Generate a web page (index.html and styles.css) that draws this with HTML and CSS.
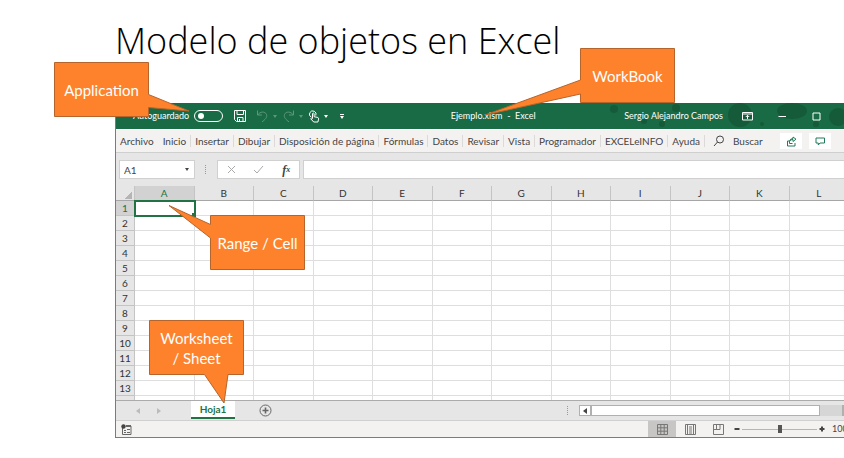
FILE: index.html
```html
<!DOCTYPE html>
<html lang="es">
<head>
<meta charset="utf-8">
<title>Modelo de objetos en Excel</title>
<link rel="stylesheet" href="styles.css">
</head>
<body>
<main class="slide">
  <h1 class="slide-title">Modelo de objetos en Excel</h1>

  <section class="app" aria-label="Excel">
    <header class="titlebar">
      <svg class="pattern" width="240" height="26" viewBox="0 0 240 26" aria-hidden="true">
        <g fill="#155b3a"><circle cx="136" cy="12" r="12"/><ellipse cx="188" cy="8" rx="15" ry="8"/><circle cx="40" cy="18" r="3"/><circle cx="234" cy="14" r="9"/><circle cx="72" cy="5" r="4"/><circle cx="212" cy="21" r="3"/><circle cx="10" cy="6" r="4"/><circle cx="158" cy="21" r="2"/><circle cx="58" cy="21" r="3"/></g>
      </svg>
      <div class="quick">
        <label class="autosave">Autoguardado <input type="checkbox" class="toggle"></label>
        <button class="icon save" aria-label="Guardar"><svg width="14" height="14" viewBox="0 0 14 14"><path d="M1.500 1.500h11v11h-9l-2-2zM4 1.500v4h6.500v-4M4.500 12.500v-4h5.500v4M6.500 10v2.500"/></svg></button>
        <button class="icon dim" aria-label="Deshacer"><svg width="13" height="14" viewBox="0 0 13 14"><path d="M1.500 1.500v4.500h4.500M1.800 5.800C4 2.500 9 2 10.500 5.500c1 3-1.500 5-4.500 7.500"/></svg></button>
        <button class="caret dim" aria-label="Opciones de deshacer"></button>
        <button class="icon dim redo" aria-label="Rehacer"><svg width="13" height="14" viewBox="0 0 13 14"><path d="M11.500 1.500v4.500h-4.500M11.200 5.800C9 2.500 4 2 2.500 5.500c-1 3 1.500 5 4.500 7.500"/></svg></button>
        <button class="caret dim" aria-label="Opciones de rehacer"></button>
        <button class="icon touch" aria-label="Modo táctil"><svg width="12" height="14" viewBox="0 0 12 14"><path d="M3 8a3.300 3.300 0 1 1 4.800-1.500M4.500 9.500v-5q.8-1 1.600 0v3.200l3.800.8q1 .5.700 1.600l-.7 2.900h-4.200l-3-3.300q.5-1 1.800-.2z"/></svg></button>
        <button class="caret" aria-label="Opciones táctiles"></button>
        <button class="caret more" aria-label="Personalizar barra"></button>
      </div>
      <div class="doc-name">Ejemplo.xlsm&nbsp; -&nbsp; Excel</div>
      <div class="account">Sergio Alejandro Campos</div>
      <div class="controls">
        <button class="icon" aria-label="Opciones de la cinta"><svg width="11" height="9" viewBox="0 0 11 9"><path d="M.5.500h10v7.500H.5zM.5 2h10M5.500 7V3.500M3.800 5l1.700-1.700L7.200 5"/></svg></button>
        <button class="icon" aria-label="Minimizar"><svg width="9" height="9" viewBox="0 0 9 9"><path d="M.5 4.500h7.500"/></svg></button>
        <button class="icon" aria-label="Maximizar"><svg width="9" height="9" viewBox="0 0 9 9"><path d="M1 1h7v7H1z"/></svg></button>
      </div>
    </header>

    <nav class="menu">
      <a href="#">Archivo</a><a href="#">Inicio</a><a href="#">Insertar</a><a href="#">Dibujar</a><a href="#">Disposición de página</a><a href="#">Fórmulas</a><a href="#">Datos</a><a href="#">Revisar</a><a href="#">Vista</a><a href="#">Programador</a><a href="#">EXCELeINFO</a><a href="#">Ayuda</a>
      <button class="search"><svg width="12" height="12" viewBox="0 0 12 12"><circle cx="7" cy="4.500" r="3.500"/><path d="M4.500 7L1 11"/></svg>Buscar</button>
      <div class="share">
        <button aria-label="Compartir"><svg width="11" height="11" viewBox="0 0 11 11"><path d="M3.500 5h-2v5h7.500v-3M3.500 7.500V5.500Q3.500 3.500 7 3.500V5.500L10 3.200 7 1v1.500Q4 2.500 3.500 5.500M3.500 7.500h3"/></svg></button>
        <button aria-label="Comentarios"><svg width="11" height="11" viewBox="0 0 11 11"><path d="M1 2h8.500v5H5L3.300 9V7H1z"/></svg></button>
      </div>
    </nav>

    <div class="formula-bar">
      <div class="name-box"><input aria-label="Cuadro de nombres" value="A1"><button class="caret" aria-label="Ver nombres"></button></div>
      <span class="grip"></span>
      <div class="formula-tools">
        <button aria-label="Cancelar"><svg width="9" height="9" viewBox="0 0 9 9"><path d="M1 1l7 7M8 1L1 8"/></svg></button>
        <button aria-label="Introducir"><svg width="11" height="9" viewBox="0 0 11 9"><path d="M1 5l3 3 6-7"/></svg></button>
        <button class="fx" aria-label="Insertar función">f<small>x</small></button>
      </div>
      <input class="formula" aria-label="Barra de fórmulas">
    </div>

    <div class="sheet">
      <table>
        <thead><tr><th class="corner"></th><th class="on">A</th><th>B</th><th>C</th><th>D</th><th>E</th><th>F</th><th>G</th><th>H</th><th>I</th><th>J</th><th>K</th><th>L</th></tr></thead>
        <tbody>
          <tr><th class="on">1</th><td class="active"></td><td></td><td></td><td></td><td></td><td></td><td></td><td></td><td></td><td></td><td></td><td></td></tr>
          <tr><th>2</th><td></td><td></td><td></td><td></td><td></td><td></td><td></td><td></td><td></td><td></td><td></td><td></td></tr>
          <tr><th>3</th><td></td><td></td><td></td><td></td><td></td><td></td><td></td><td></td><td></td><td></td><td></td><td></td></tr>
          <tr><th>4</th><td></td><td></td><td></td><td></td><td></td><td></td><td></td><td></td><td></td><td></td><td></td><td></td></tr>
          <tr><th>5</th><td></td><td></td><td></td><td></td><td></td><td></td><td></td><td></td><td></td><td></td><td></td><td></td></tr>
          <tr><th>6</th><td></td><td></td><td></td><td></td><td></td><td></td><td></td><td></td><td></td><td></td><td></td><td></td></tr>
          <tr><th>7</th><td></td><td></td><td></td><td></td><td></td><td></td><td></td><td></td><td></td><td></td><td></td><td></td></tr>
          <tr><th>8</th><td></td><td></td><td></td><td></td><td></td><td></td><td></td><td></td><td></td><td></td><td></td><td></td></tr>
          <tr><th>9</th><td></td><td></td><td></td><td></td><td></td><td></td><td></td><td></td><td></td><td></td><td></td><td></td></tr>
          <tr><th>10</th><td></td><td></td><td></td><td></td><td></td><td></td><td></td><td></td><td></td><td></td><td></td><td></td></tr>
          <tr><th>11</th><td></td><td></td><td></td><td></td><td></td><td></td><td></td><td></td><td></td><td></td><td></td><td></td></tr>
          <tr><th>12</th><td></td><td></td><td></td><td></td><td></td><td></td><td></td><td></td><td></td><td></td><td></td><td></td></tr>
          <tr><th>13</th><td></td><td></td><td></td><td></td><td></td><td></td><td></td><td></td><td></td><td></td><td></td><td></td></tr>
          <tr><th></th><td></td><td></td><td></td><td></td><td></td><td></td><td></td><td></td><td></td><td></td><td></td><td></td></tr>
        </tbody>
      </table>
    </div>

    <div class="tabs">
      <button class="arrow" aria-label="Hoja anterior"><svg width="4" height="6" viewBox="0 0 4 6"><path d="M4 0v6L0 3z"/></svg></button>
      <button class="arrow" aria-label="Hoja siguiente"><svg width="4" height="6" viewBox="0 0 4 6"><path d="M0 0v6l4-3z"/></svg></button>
      <button class="tab">Hoja1</button>
      <button class="add" aria-label="Hoja nueva"><svg width="13" height="13" viewBox="0 0 13 13"><circle cx="6.500" cy="6.500" r="5.500"/><path d="M6.500 3.500v6M3.500 6.500h6" stroke-width="1.600"/></svg></button>
      <span class="grip"></span>
      <div class="scroll">
        <button aria-label="Desplazar a la izquierda"><svg width="4" height="6" viewBox="0 0 4 6"><path d="M4 0v6L0 3z"/></svg></button>
        <div class="thumb"></div>
        <button class="end" aria-label="Desplazar a la derecha"></button>
      </div>
    </div>

    <footer class="status">
      <button class="macro" aria-label="Grabar macro"><svg width="11" height="11" viewBox="0 0 11 11"><path d="M1.500 4v6.500h8.500V2H5" fill="none" stroke="#666"/><path d="M5 1h5v2H5zM3 6h2v1H3zM6 5h3v1H6zM3 8h2v1H3zM6 8h3v1H6z" fill="#666"/><circle cx="2.500" cy="2.500" r="2.200" fill="#444"/></svg></button>
      <div class="views">
        <button class="on" aria-label="Normal"><svg width="11" height="11" viewBox="0 0 11 11"><path d="M.5.500h10v10H.5zM.5 3.800h10M.5 7.200h10M3.800.500v10M7.200.500v10"/></svg></button>
        <button aria-label="Diseño de página"><svg width="11" height="11" viewBox="0 0 11 11"><path d="M.5.500h10v10H.5zM2.500.500v10M8.500.500v10M4 3h3M4 5h3M4 7h3M4 9h3"/></svg></button>
        <button aria-label="Salto de página"><svg width="11" height="11" viewBox="0 0 11 11"><path d="M.5.500h10v10H.5zM3.500.500v5M7 .500v5M.5 5.500h6.500"/></svg></button>
      </div>
      <button class="step" aria-label="Alejar"><svg width="6" height="6" viewBox="0 0 6 6"><path d="M.5 3h5"/></svg></button>
      <input class="zoom" type="range" aria-label="Zoom" min="0" max="100" value="50">
      <button class="step" aria-label="Acercar"><svg width="6" height="6" viewBox="0 0 6 6"><path d="M.5 3h5M3 .500v5"/></svg></button>
      <span class="percent">100%</span>
    </footer>
  </section>

  <div class="callout application"><svg width="95" height="55" viewBox="0 0 95 55"><path d="M.5.500h94v32L135 49 94.500 45.500v9H.5z"/></svg><span>Application</span></div>
  <div class="callout workbook"><svg width="95" height="55" viewBox="0 0 95 55"><path d="M.5.500h94v54H.5v-8.500L-95 67 .5 32z"/></svg><span>WorkBook</span></div>
  <div class="callout range"><svg width="95" height="55" viewBox="0 0 95 55"><path d="M.5.500h94v54H.5V23L-41-9.500.5 9.500z"/></svg><span>Range / Cell</span></div>
  <div class="callout worksheet"><svg width="95" height="55" viewBox="0 0 95 55"><path d="M.5.500h94v54H79L75 83 55.500 54.500H.5z"/></svg><span>Worksheet<br>/ Sheet</span></div>
</main>
</body>
</html>
```
FILE: styles.css
```css
* { box-sizing: border-box; }

body {
  margin: 0;
  background: #fff;
  color: #444;
  font: 10px/12px Lato, "Open Sans", sans-serif;
}

button, input {
  margin: 0;
  padding: 0;
  border: 0;
  background: none;
  color: inherit;
  font: inherit;
}

button { display: flex; align-items: center; justify-content: center; }

svg { display: block; flex: none; fill: none; stroke: currentColor; }

.slide { position: relative; overflow: hidden; padding-bottom: 20px; }

.slide-title {
  margin: 0;
  padding: 16px 0 0 115px;
  height: 103px;
  color: #000;
  font: 300 36px/50px "Open Sans", sans-serif;
  white-space: nowrap;
}

.app {
  margin-left: 115px;
  border: solid #4f9276;
  border-width: 0 0 1px 1px;
  background: #e6e6e6;
}

/* Title bar */
.titlebar {
  position: relative;
  display: flex;
  align-items: center;
  height: 26px;
  padding-left: 17px;
  background: #186b44;
  color: #fff;
  font-size: 9px;
  white-space: nowrap;
}
.pattern { position: absolute; top: 0; right: 0; stroke: none; }
.titlebar > div { position: relative; }
.quick { display: flex; align-items: center; }
.autosave { display: flex; align-items: center; gap: 5px; }
.toggle {
  appearance: none;
  display: flex;
  align-items: center;
  width: 29px;
  height: 12px;
  padding-left: 3px;
  border: 1px solid #fff;
  border-radius: 6px;
}
.toggle::before { content: ""; width: 6px; height: 6px; border-radius: 50%; background: #fff; }
.save { margin: 0 9px 0 10px; }
.redo { margin-left: 1px; }
.touch { margin-left: 1px; }
.dim { opacity: .3; }
.caret { width: 12px; height: 12px; }
.caret::before { content: ""; border: solid transparent; border-width: 3px 2px 0; border-top-color: currentColor; }
.more { flex-direction: column; gap: 1px; margin-left: 4px; }
.more::before { order: 1; }
.more::after { content: ""; width: 4px; height: 1px; background: currentColor; }
.doc-name { flex: 1; padding-left: 14px; text-align: center; }
.controls { display: flex; gap: 25px; margin: 0 23px 0 19px; }

/* Menu */
.menu {
  display: flex;
  align-items: center;
  height: 24px;
  border-top: 1px solid #fff;
  border-bottom: 1px solid #cfcfcf;
  background: #f4f2f1;
  white-space: nowrap;
}
.menu a {
  padding: 0 4px;
  border-right: 1px solid #dcdad9;
  color: #444;
  text-decoration: none;
}
.menu a:first-child { border-color: transparent; }
.search { gap: 8px; margin-left: 8px; }
.share { display: flex; gap: 7px; margin: 0 13px 0 auto; }
.share button { width: 22px; height: 16px; background: #fff; color: #217a58; }

/* Formula bar */
.formula-bar { display: flex; height: 33px; padding: 7px 0 7px 3px; }
.name-box {
  display: flex;
  align-items: center;
  width: 76px;
  border: 1px solid #d0d0d0;
  background: #fff;
}
.name-box input { flex: 1; width: 40px; padding-left: 4px; }
.name-box .caret { width: 15px; }
.grip { align-self: center; width: 2px; height: 9px; margin: 0 10px; border-left: 1px dotted #999; }
.formula-tools {
  display: flex;
  align-items: center;
  justify-content: space-around;
  width: 83px;
  border: 1px solid #d0d0d0;
  background: #fff;
  color: #aaa;
}
.fx { color: #444; font: italic bold 12px/12px "Liberation Serif", serif; }
.fx small { font-size: 8px; }
.formula { flex: 1; margin-left: 3px; border: solid #d0d0d0; border-width: 1px 0 1px 1px; background: #fff; }

/* Sheet */
.sheet { overflow: hidden; height: 214px; background: #fff; }
.sheet table {
  table-layout: fixed;
  width: calc(100% + 5px);
  border-collapse: separate;
  border-spacing: 0;
}
.sheet tr { height: 15px; }
.sheet th, .sheet td { padding: 0; border: solid #dedede; border-width: 0 1px 1px 0; }
.sheet th { background: #e6e6e6; color: #333; font-weight: 400; line-height: 14px; border-color: #c4c4c4; }
.sheet thead th { border-bottom-color: #a6a6a6; }
.sheet .corner { width: 19px; background: linear-gradient(135deg, #e6e6e6 60%, #b5b5b5 60%) right 2px bottom 1px / 9px 9px no-repeat #e6e6e6; }
.sheet th.on { background: #d2d2d2; color: #217346; }
.sheet .active { position: relative; outline: 2px solid #217346; outline-offset: -1px; }
.sheet .active::after {
  content: "";
  position: absolute;
  right: -2px;
  bottom: -2px;
  width: 4px;
  height: 4px;
  background: #217346;
}

/* Sheet tabs */
.tabs { display: flex; align-items: center; height: 20px; border-top: 1px solid #ababab; }
.arrow { width: 21px; color: #bbb; }
.arrow:first-child { margin-left: 11px; }
.tabs svg { stroke: none; fill: currentColor; }
.tab {
  align-self: flex-start;
  width: 44px;
  height: 18px;
  margin-left: 22px;
  border-bottom: 2px solid #217346;
  background: #fff;
  color: #217346;
  font-weight: 700;
}
.add { margin-left: 24px; color: #666; }
.tabs .add svg { fill: none; stroke: currentColor; }
.tabs .grip { margin-left: auto; }
.scroll { display: flex; width: 265px; height: 11px; background: #d6d6d6; }
.scroll button { width: 12px; border: 1px solid #b0b0b0; background: #fff; }
.scroll .thumb { width: 229px; border: 1px solid #b0b0b0; background: #fff; }
.scroll .end { width: 2px; margin-left: auto; }

/* Status bar */
.status {
  display: flex;
  align-items: center;
  height: 17px;
  overflow: hidden;
  border-top: 1px solid #d0d0d0;
  background: #f4f2f1;
}
.macro { margin: 0 auto 0 5px; }
.macro svg { stroke: none; }
.views { display: flex; height: 100%; color: #777; }
.views button { width: 28px; }
.views .on { background: #c8c6c4; }
.step { width: 10px; height: 10px; stroke-width: 2px; }
.zoom { appearance: none; width: 75px; height: 10px; background: linear-gradient(#b5b5b5, #b5b5b5) center / 100% 1px no-repeat; }
.zoom::-webkit-slider-thumb { appearance: none; width: 4px; height: 8px; background: #555; }
.percent { width: 12px; margin-left: 5px; font-size: 9px; white-space: nowrap; }

/* Callouts pinned over the window */
.callout {
  position: absolute;
  display: grid;
  place-items: center;
  width: 95px;
  height: 55px;
  color: #fff;
  font: 15px/20px Lato, sans-serif;
  text-align: center;
}
.callout svg, .callout span { grid-area: 1 / 1; }
.callout span { position: relative; }
.callout svg { overflow: visible; fill: #fd822b; stroke: #b5652c; }
.application { left: 54px; top: 62px; }
.workbook { left: 580px; top: 48px; }
.range { left: 210px; top: 215px; }
.worksheet { left: 149px; top: 320px; }
```
